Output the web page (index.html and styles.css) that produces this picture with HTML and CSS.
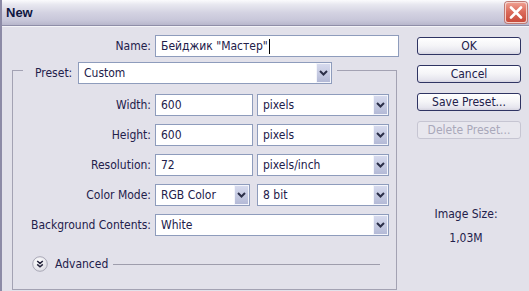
FILE: index.html
```html
<!DOCTYPE html>
<html>
<head>
<meta charset="utf-8">
<link rel="stylesheet" href="styles.css">
</head>
<body>
<div class="window">
  <div class="titlebar">
    <span class="title">New</span>
    <span class="close"><svg width="14" height="13" viewBox="0 0 14 13"><path d="M2 1.5 L12 11.5 M12 1.5 L2 11.5" stroke="#fff" stroke-width="2.6" stroke-linecap="round"/></svg></span>
  </div>
  <div class="content">
    <div class="form">
      <div class="name-row">
        <span class="lbl name-lbl">Name:</span>
        <div class="field name-field">Бейджик "Мастер"<span class="caret"></span></div>
      </div>
      <div class="group">
        <div class="group-head">
          <div class="legend">
            <span class="legend-lbl">Preset:</span>
            <div class="select preset"><span class="val">Custom</span><span class="arrow"><svg width="9" height="6" viewBox="0 0 9 6"><path d="M1 1 L4.5 4.5 L8 1" fill="none" stroke="#2b2f48" stroke-width="2"/></svg></span></div>
          </div>
        </div>
        <div class="rows">
          <div class="row">
            <span class="lbl">Width:</span>
            <div class="field num">600</div>
            <div class="select unit"><span class="val">pixels</span><span class="arrow"><svg width="9" height="6" viewBox="0 0 9 6"><path d="M1 1 L4.5 4.5 L8 1" fill="none" stroke="#2b2f48" stroke-width="2"/></svg></span></div>
          </div>
          <div class="row">
            <span class="lbl">Height:</span>
            <div class="field num">600</div>
            <div class="select unit"><span class="val">pixels</span><span class="arrow"><svg width="9" height="6" viewBox="0 0 9 6"><path d="M1 1 L4.5 4.5 L8 1" fill="none" stroke="#2b2f48" stroke-width="2"/></svg></span></div>
          </div>
          <div class="row">
            <span class="lbl">Resolution:</span>
            <div class="field num">72</div>
            <div class="select unit"><span class="val">pixels/inch</span><span class="arrow"><svg width="9" height="6" viewBox="0 0 9 6"><path d="M1 1 L4.5 4.5 L8 1" fill="none" stroke="#2b2f48" stroke-width="2"/></svg></span></div>
          </div>
          <div class="row">
            <span class="lbl">Color Mode:</span>
            <div class="select mode"><span class="val">RGB Color</span><span class="arrow"><svg width="9" height="6" viewBox="0 0 9 6"><path d="M1 1 L4.5 4.5 L8 1" fill="none" stroke="#2b2f48" stroke-width="2"/></svg></span></div>
            <div class="select unit"><span class="val">8 bit</span><span class="arrow"><svg width="9" height="6" viewBox="0 0 9 6"><path d="M1 1 L4.5 4.5 L8 1" fill="none" stroke="#2b2f48" stroke-width="2"/></svg></span></div>
          </div>
          <div class="row">
            <span class="lbl">Background Contents:</span>
            <div class="select wide"><span class="val">White</span><span class="arrow"><svg width="9" height="6" viewBox="0 0 9 6"><path d="M1 1 L4.5 4.5 L8 1" fill="none" stroke="#2b2f48" stroke-width="2"/></svg></span></div>
          </div>
        </div>
        <div class="advanced">
          <span class="adv-btn"><svg width="16" height="16" viewBox="0 0 16 16"><defs><radialGradient id="g" cx="0.4" cy="0.35" r="0.7"><stop offset="0" stop-color="#ffffff"/><stop offset="1" stop-color="#dcdbe3"/></radialGradient></defs><circle cx="8" cy="8" r="7.3" fill="url(#g)" stroke="#a9a8b6" stroke-width="1"/><path d="M5.2 5 L8 7.4 L10.8 5 M5.2 8.4 L8 10.8 L10.8 8.4" fill="none" stroke="#23223a" stroke-width="1.5"/></svg></span>
          <span class="adv-lbl">Advanced</span>
          <span class="adv-line"></span>
        </div>
      </div>
    </div>
    <div class="side">
      <div class="btn">OK</div>
      <div class="btn">Cancel</div>
      <div class="btn">Save Preset...</div>
      <div class="btn disabled">Delete Preset...</div>
      <div class="size-lbl">Image Size:</div>
      <div class="size-val">1,03M</div>
    </div>
  </div>
</div>
</body>
</html>
```
FILE: styles.css
```css
html, body {
  margin: 0;
  padding: 0;
  background: #e2e1ea;
}
.window {
  width: 529px;
  height: 291px;
  overflow: hidden;
  box-sizing: border-box;
  border-left: 2px solid #8c8aa6;
  background: #e2e1ea;
  font-family: "DejaVu Sans Condensed", "DejaVu Sans", sans-serif;
  font-stretch: condensed;
  font-size: 12px;
  color: #22204a;
}
.titlebar {
  height: 26px;
  box-sizing: border-box;
  border-bottom: 1px solid #8f8ea8;
  background: linear-gradient(#fbfbfd 0%, #e8e8f0 18%, #d4d3e2 50%, #c7c6d9 82%, #b8b7cc 100%);
  display: flex;
  align-items: center;
  justify-content: space-between;
  padding: 0 2px 0 4px;
}
.title {
  font-family: "Liberation Sans", Arial, sans-serif;
  font-stretch: normal;
  font-weight: bold;
  font-size: 13px;
  color: #0f1640;
}
.close {
  width: 22px;
  height: 21px;
  box-sizing: border-box;
  border: 1px solid #f6d0c8;
  border-radius: 3px;
  background: linear-gradient(#ee9d8f 0%, #dc6c5c 45%, #c84a3a 100%);
  box-shadow: 0 0 0 1px #c07a74;
  display: flex;
  align-items: center;
  justify-content: center;
}
.content {
  display: flex;
  box-shadow: inset 0 1px 0 #f4f4f8;
}
.form {
  width: 398px;
  padding-top: 9px;
}
.name-row {
  display: flex;
  align-items: center;
  height: 22px;
}
.lbl {
  text-align: right;
  white-space: nowrap;
}
.name-lbl {
  width: 149px;
  margin-right: 4px;
}
.field {
  height: 22px;
  box-sizing: border-box;
  border: 1px solid #8e9cbc;
  background: #fff;
  padding-left: 5px;
  line-height: 20px;
  display: flex;
  align-items: center;
  white-space: nowrap;
}
.name-field {
  width: 244px;
}
.caret {
  display: inline-block;
  width: 1px;
  height: 15px;
  background: #000;
  margin-left: 1px;
}
.group {
  margin: 13px 0 0 10px;
  width: 385px;
  box-sizing: border-box;
  border: 1px solid #a3a2b3;
  height: 220px;
}
.group-head {
  display: flex;
  margin-top: -9px;
}
.legend {
  display: flex;
  align-items: center;
  margin-left: 10px;
  padding: 0 5px 0 12px;
  background: #e2e1ea;
}
.legend-lbl {
  width: 38px;
  margin-right: 5px;
}
.select {
  display: flex;
  height: 22px;
  box-sizing: border-box;
  border: 1px solid #8e9cbc;
  background: #fff;
}
.select .val {
  flex: 1;
  padding-left: 5px;
  line-height: 20px;
  white-space: nowrap;
  overflow: hidden;
}
.select .arrow {
  width: 15px;
  box-sizing: border-box;
  border: 1px solid #f4f5fb;
  background: linear-gradient(#d6daee 0%, #c3c8e0 60%, #b3b9d6 100%);
  display: flex;
  align-items: center;
  justify-content: center;
}
.preset {
  width: 254px;
}
.rows {
  margin-top: 10px;
  display: flex;
  flex-direction: column;
  gap: 8px;
}
.row {
  display: flex;
  align-items: center;
  height: 22px;
}
.row .lbl {
  width: 138px;
  margin-right: 4px;
}
.num {
  width: 98px;
  margin-right: 4px;
}
.unit {
  width: 132px;
}
.mode {
  width: 95px;
  margin-right: 7px;
}
.wide {
  width: 234px;
}
.advanced {
  display: flex;
  align-items: center;
  height: 16px;
  margin-top: 20px;
  padding-left: 19px;
  padding-right: 16px;
}
.adv-btn {
  width: 16px;
  height: 16px;
  display: flex;
}
.adv-lbl {
  margin-left: 7px;
}
.adv-line {
  flex: 1;
  height: 1px;
  background: #9e9dac;
  margin-left: 5px;
}
.side {
  flex: 1;
  padding: 11px 0 0 17px;
  display: flex;
  flex-direction: column;
}
.btn {
  width: 104px;
  height: 18px;
  box-sizing: border-box;
  border: 1px solid #2f3463;
  border-radius: 3px;
  background: linear-gradient(#ffffff 0%, #f4f4f7 50%, #e6e5ee 85%, #d5d4e0 100%);
  text-align: center;
  line-height: 16px;
  margin-bottom: 10px;
}
.btn.disabled {
  border-color: #c6c5d2;
  background: #e8e7ee;
  color: #a9a8ba;
}
.size-lbl {
  width: 98px;
  text-align: center;
  margin-top: 58px;
  line-height: 14px;
}
.size-val {
  width: 98px;
  text-align: center;
  margin-top: 10px;
  line-height: 14px;
}
```
